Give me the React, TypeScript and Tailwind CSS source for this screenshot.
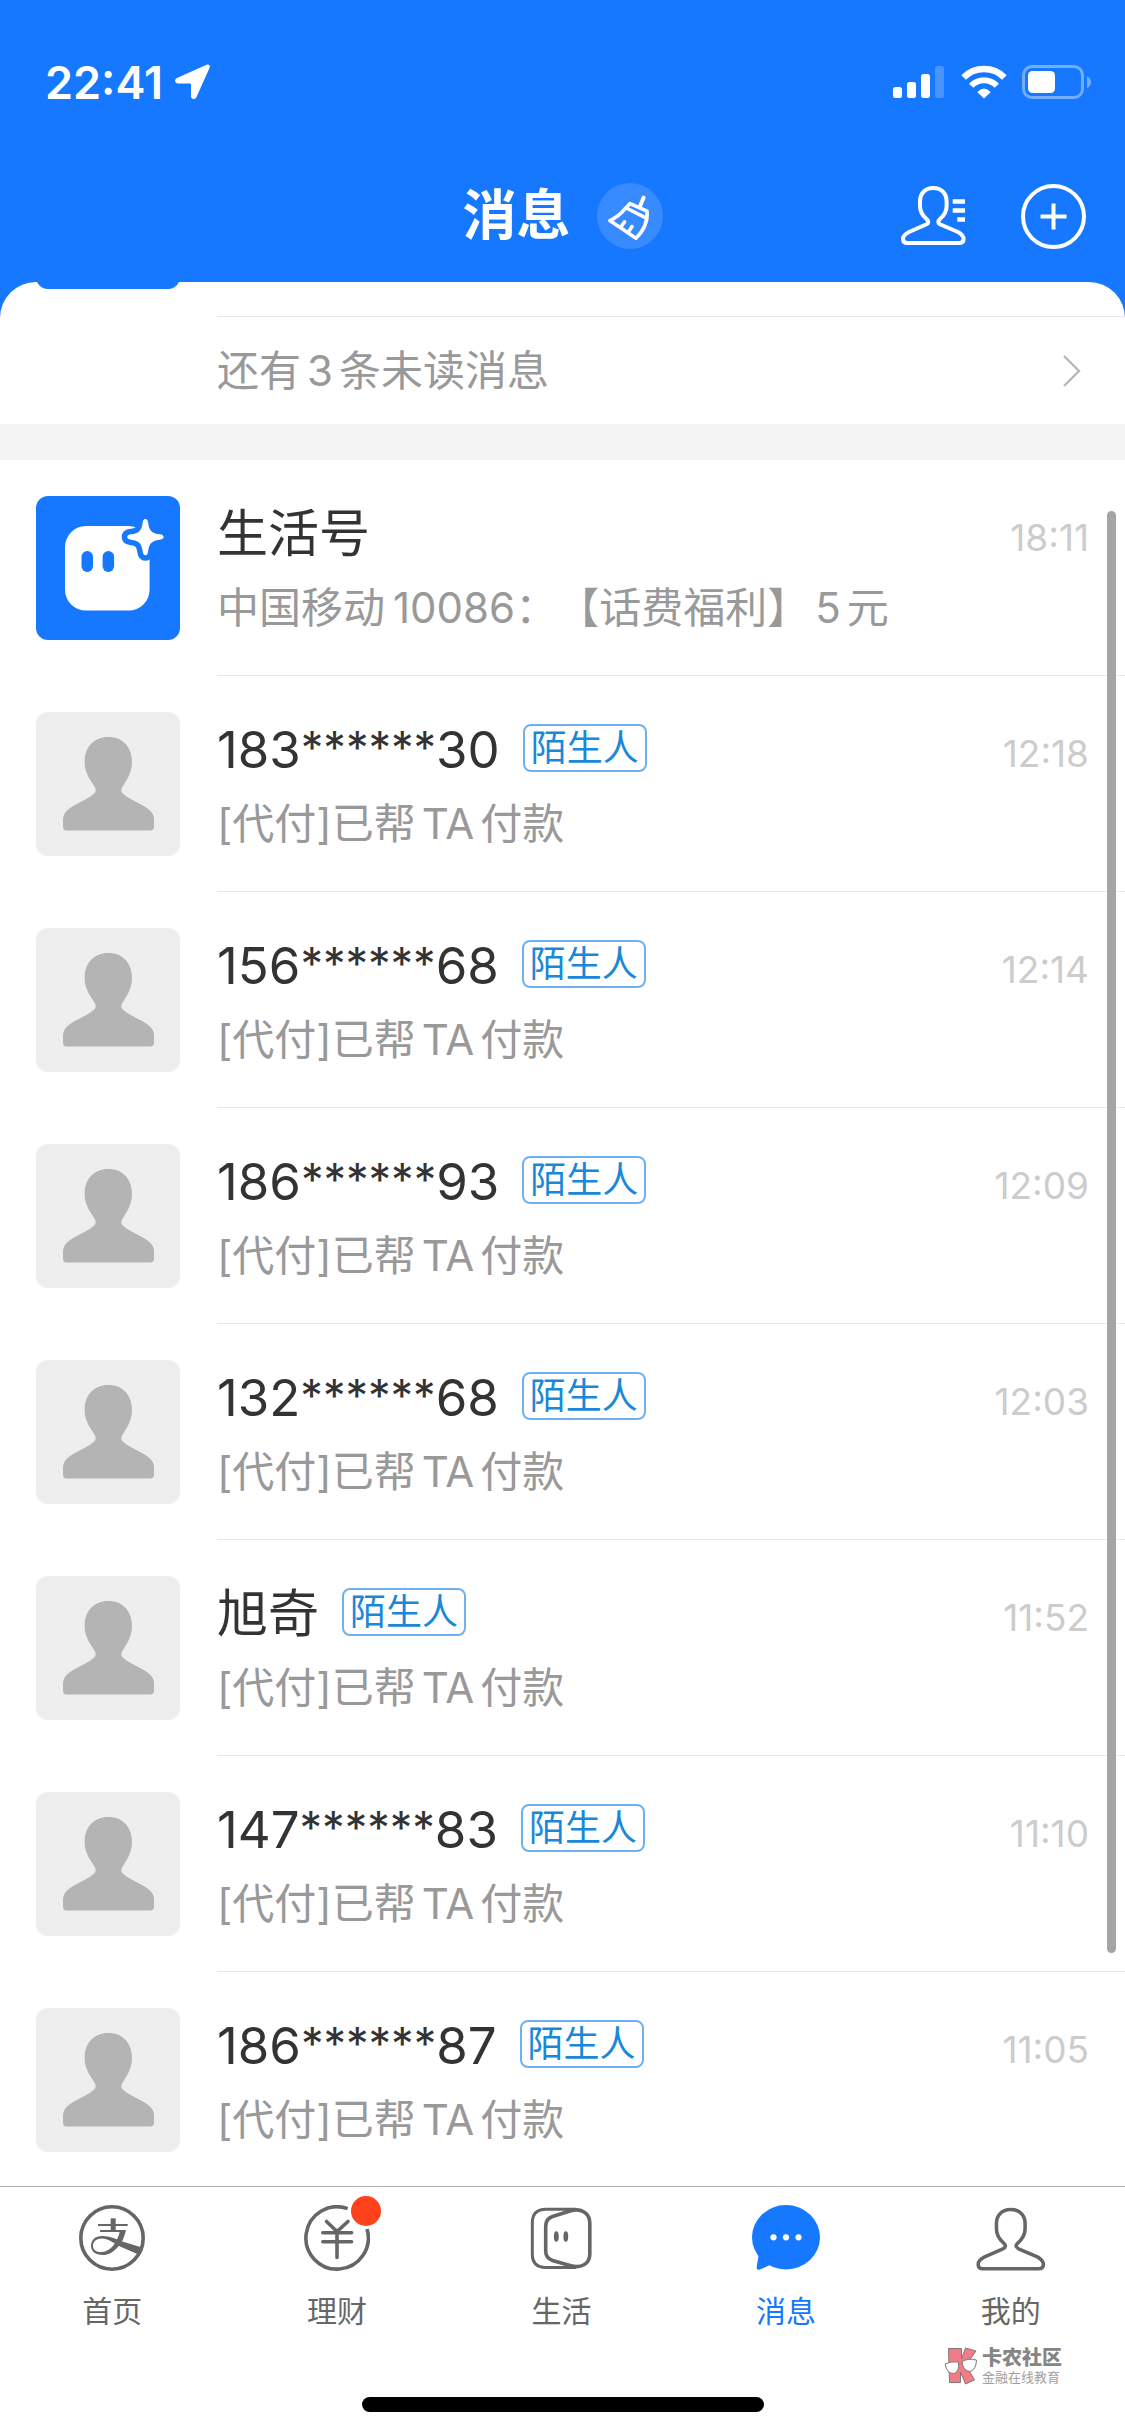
import type { ReactNode } from "react";

type Chat = { name: string; time: string };

const chats: Chat[] = [
  { name: "183******30", time: "12:18" },
  { name: "156******68", time: "12:14" },
  { name: "186******93", time: "12:09" },
  { name: "132******68", time: "12:03" },
  { name: "旭奇", time: "11:52" },
  { name: "147******83", time: "11:10" },
  { name: "186******87", time: "11:05" },
];

const PERSON =
  "M32.3 2C23 2 19 8.5 19 15V20C19 26 22 30 25.5 33C28 35.3 28 37 25 38.5L8 46C4 48 2 50 2 53C2 56 4 57 6.5 57H58C61 57 62.6 56 62.6 53C62.6 50 60.5 48 57 46L39.5 38.5C36.6 37 36.6 35.3 39 33C42.5 30 45.6 26 45.6 20V15C45.6 8.5 41.5 2 32.3 2Z";

function StatusBar() {
  return (
    <div className="flex h-14 items-center justify-between pl-[45px] pr-[33px] text-white">
      <div className="flex items-center gap-3">
        <span className="text-[45px] font-semibold leading-none">22:41</span>
        <svg width="36" height="36" viewBox="0 0 36 36" fill="currentColor" aria-hidden="true">
          <path d="M31.5 0.8C33.8-.2 35.4 1.4 34.6 3.8L21.4 33.2C20.2 36 16 35.4 16 32.2V20.6Q16 19.4 14.8 19.4H3C-.4 19.4-1 15.4 2 14Z" />
        </svg>
      </div>
      <div className="flex items-center">
        <svg width="52" height="34" viewBox="0 0 52 34" fill="currentColor" aria-hidden="true">
          <rect x="0" y="22" width="9" height="11" rx="2.5" />
          <rect x="14" y="17" width="9" height="16" rx="2.5" />
          <rect x="28" y="9" width="9" height="24" rx="2.5" />
          <rect x="42" y="1" width="9" height="32" rx="2.5" opacity=".22" />
        </svg>
        <svg className="ml-4" width="46" height="34" viewBox="0 0 46 34" fill="none" aria-hidden="true">
          <path d="M2.6 12.4A29 29 0 0 1 43.4 12.4" stroke="currentColor" strokeWidth="6.4" />
          <path d="M10.2 20.8A17.5 17.5 0 0 1 35.8 20.8" stroke="currentColor" strokeWidth="6" />
          <path d="M16.2 27Q23 20 29.8 27L23 33.6Z" fill="currentColor" />
        </svg>
        <svg className="ml-[15px]" width="70" height="34" viewBox="0 0 70 34" fill="none" aria-hidden="true">
          <rect x="1.5" y="1.5" width="59" height="31" rx="8.5" stroke="currentColor" strokeWidth="3" opacity=".4" />
          <rect x="6" y="6" width="27" height="22" rx="4.5" fill="currentColor" />
          <path d="M65 11Q69 13 69 17Q69 21 65 23Z" fill="currentColor" opacity=".4" />
        </svg>
      </div>
    </div>
  );
}

function TitleBar() {
  return (
    <div className="mt-[50px] grid h-28 grid-cols-[1fr_auto_1fr] items-center text-white">
      <span />
      <div className="flex items-center gap-[26px]">
        <h1 className="text-[54px] font-bold leading-none">消息</h1>
        <button type="button" aria-label="清除未读" className="size-[66px] rounded-full bg-[#388aff]">
          <svg viewBox="0 0 66 66" fill="none" stroke="currentColor" strokeWidth="3.6" strokeLinejoin="round" strokeLinecap="round" aria-hidden="true">
            <path d="M46.6 14.6L42.6 24.2" strokeWidth="4" />
            <path d="M33 20.6L50 28.2Q51.4 43 39 55.2L12.8 37.6Q22 33.5 28.4 25.4Z" />
            <path d="M29.2 25L49.4 35.2" />
            <path d="M27.6 38.8L24.6 43M35 43.6L32 48" />
          </svg>
        </button>
      </div>
      <div className="flex items-center justify-end gap-[55px] pr-[39px]">
        <button type="button" aria-label="通讯录">
          <svg width="65" height="60" viewBox="0 0 65 60" fill="none" aria-hidden="true">
            <path d={PERSON} stroke="currentColor" strokeWidth="4" strokeLinejoin="round" />
            <path d="M51.7 15.5H64M51.7 24.5H64M56.3 33.5H64" stroke="currentColor" strokeWidth="4.4" />
          </svg>
        </button>
        <button type="button" aria-label="添加">
          <svg width="65" height="65" viewBox="0 0 65 65" fill="none" stroke="currentColor" strokeWidth="4" aria-hidden="true">
            <circle cx="32.5" cy="32.5" r="30.5" />
            <path d="M32.5 19.5V45.5M19.5 32.5H45.5" />
          </svg>
        </button>
      </div>
    </div>
  );
}

/* Masked digits are set a little smaller and higher than the visible ones. */
function Name({ value }: { value: string }) {
  const parts = value.split(/(\*+)/);
  return (
    <h2 className="flex items-start pt-1 text-[51px] leading-[48px] text-[#333333]">
      {parts.map((p, i) => (
        <span key={i} className={p.startsWith("*") ? "text-[45px] leading-[44px]" : undefined}>
          {p}
        </span>
      ))}
    </h2>
  );
}

function Row({ avatar, name, text, time, tag, last }: { avatar: ReactNode; name: string; text: ReactNode; time: string; tag?: string; last?: boolean }) {
  return (
    <li className="flex h-[216px] shrink-0 gap-[37px] pl-9">
      <div className="mt-9 size-36 shrink-0 overflow-hidden rounded-xl">{avatar}</div>
      <div className={last ? "flex min-w-0 flex-1 justify-between pr-9" : "flex min-w-0 flex-1 justify-between border-b border-[#e9e9e9] pr-9"}>
        <div className="min-w-0 pt-12">
          <div className="flex h-12 items-center gap-[23px]">
            <Name value={name} />
            {tag && (
              <span className="flex h-12 items-center rounded-lg border-2 border-[#6fb1f0] px-1.5 text-[36px] leading-none text-[#1a88d8]">{tag}</span>
            )}
          </div>
          <p className="mt-7 whitespace-nowrap text-[42px] leading-[48px] text-[#999999]">{text}</p>
        </div>
        <time className="pt-[54px] text-[37px] leading-[48px] text-[#cccccc]">{time}</time>
      </div>
    </li>
  );
}

function LifeAvatar() {
  return (
    <svg viewBox="0 0 144 144" className="bg-[#1677ff]" aria-hidden="true">
      <rect x="29" y="30" width="84.6" height="84.6" rx="21" fill="#fff" />
      <rect x="45.5" y="55" width="11.5" height="21" rx="5.7" fill="#1677ff" />
      <rect x="66.6" y="55" width="11.5" height="21" rx="5.7" fill="#1677ff" />
      <path
        d="M109.4 23C111 23 111.8 24 112.2 27C113 34.5 116.4 37.6 123.5 38.3C126.5 38.6 127.6 39.5 127.6 41C127.6 42.5 126.5 43.4 123.5 43.7C116.4 44.4 113 47.5 112.2 55C111.8 58 111 59.2 109.4 59.2C107.8 59.2 107 58 106.6 55C105.8 47.5 102.4 44.4 95.3 43.7C92.3 43.4 91.2 42.5 91.2 41C91.2 39.5 92.3 38.6 95.3 38.3C102.4 37.6 105.8 34.5 106.6 27C107 24 107.8 23 109.4 23Z"
        fill="#fff"
        stroke="#1677ff"
        strokeWidth="11"
        strokeLinejoin="round"
        paintOrder="stroke"
      />
    </svg>
  );
}

function PersonAvatar() {
  return (
    <svg viewBox="0 0 144 144" className="bg-[#eeeeee]" aria-hidden="true">
      <path
        d="M72.4 25C58 25 48.6 35 48.6 50C48.6 60 53.5 67 57.5 73C60.5 77.5 60.5 79.5 57 82.5C50 88.5 38 92 31 98.5C28 101.5 27 104 27 108V114.5Q27 118.5 31 118.5H114Q118 118.5 118 114.5V108C118 104 117 101.5 114 98.5C107 92 95 88.5 88 82.5C84.5 79.5 84.5 77.5 87.5 73C91.5 67 96 60 96 50C96 35 86.6 25 72.4 25Z"
        fill="#b4b4b4"
      />
    </svg>
  );
}

function HomeIcon() {
  return (
    <svg width="66" height="66" viewBox="0 0 66 66" fill="none" aria-hidden="true">
      <circle cx="33" cy="33" r="31.2" stroke="currentColor" strokeWidth="3.6" />
      <path d="M19 20H48.7M21 26H46" stroke="currentColor" strokeWidth="2" />
      <path d="M31.7 13.3H36.7V26H31.7Z" fill="currentColor" />
      <path
        d="M41.2 25H47C45 33 43 38 38 43C33 48 29 50 24 50C16 50 12 46 12 41C12 35 16 31 23 31C31 31 38 34.5 45 37L62 42.3L59.5 49.5L41 41.5C34 37.5 29 33.6 23 33.6C17.5 33.6 14 36.5 14 41C14 45 17.5 47.5 23 47C31 46.5 38 39 41.2 25Z"
        fill="currentColor"
      />
    </svg>
  );
}

function WealthIcon() {
  return (
    <svg width="66" height="66" viewBox="0 0 66 66" fill="none" stroke="currentColor" strokeWidth="3.6" aria-hidden="true">
      <path d="M43.7 3.6A31.2 31.2 0 1 0 63 24" />
      <path d="M22.5 16.5L33 26.5L44 16.5M33 25.5V52.5M18.8 27.7H47.6M18.8 36.7H47.6" strokeLinecap="round" />
    </svg>
  );
}

function LifeIcon() {
  return (
    <svg width="66" height="66" viewBox="0 0 66 66" fill="none" stroke="currentColor" aria-hidden="true">
      <path d="M48 4.3H18Q4.3 4.3 4.3 18V49Q4.3 62.5 18 62.5H48" strokeWidth="3" />
      <path d="M24.5 11.5L42 6C53 2.5 61.8 8 61.8 18V49C61.8 59 53 64 42 60.5L24.5 55.5Q17.7 53 17.7 46V21Q17.7 14 24.5 11.5Z" strokeWidth="3.6" />
      <ellipse cx="28.3" cy="31.5" rx="2.4" ry="5.3" fill="currentColor" stroke="none" />
      <ellipse cx="37.8" cy="31.5" rx="2.4" ry="5.3" fill="currentColor" stroke="none" />
    </svg>
  );
}

function MessageIcon() {
  return (
    <svg width="68" height="66" viewBox="0 0 68 66" fill="currentColor" aria-hidden="true">
      <ellipse cx="34" cy="32.2" rx="34" ry="32.2" />
      <path d="M7 48L4.6 62.5Q4.6 65.6 8 64.6L19 59.5Z" />
      <g fill="#fff">
        <circle cx="21.5" cy="32.3" r="3.1" />
        <circle cx="34" cy="32.3" r="3.1" />
        <circle cx="46.5" cy="32.3" r="3.1" />
      </g>
    </svg>
  );
}

function MeIcon() {
  return (
    <svg width="70" height="66" viewBox="0 -2 65 61" fill="none" aria-hidden="true">
      <path d={PERSON} stroke="currentColor" strokeWidth="3.3" strokeLinejoin="round" />
    </svg>
  );
}

function Tab({ label, icon, active, dot }: { label: string; icon: ReactNode; active?: boolean; dot?: boolean }) {
  return (
    <a
      href="#"
      aria-current={active ? "page" : undefined}
      className={active ? "flex flex-1 flex-col items-center text-[#1677ff]" : "flex flex-1 flex-col items-center text-[#666666]"}
    >
      <span className="relative">
        {icon}
        {dot && <span className="absolute -right-[11px] -top-[9px] size-[30px] rounded-full bg-[#ff411c]" />}
      </span>
      <span className="mt-[22px] text-[30px] leading-9">{label}</span>
    </a>
  );
}

function Watermark() {
  return (
    <div className="absolute right-[63px] top-[160px] flex items-center gap-1 text-[#858585]">
      <svg width="34" height="38" viewBox="0 0 34 38" stroke="#857579" strokeWidth="1" aria-hidden="true">
        <path d="M4.5 1.5H17.5V12L21.5 1L32 4L22 18L30.5 33L21.5 37L16.5 25V35.5H5.5Z" fill="#f07c86" />
        <path d="M1 17Q7 14 14.5 15Q15.5 25 10 26.5Q3 27 1 17Z" fill="#fff" />
        <path d="M18 14.5Q24 11 32.5 13Q32 23 26 24.5Q19 24 18 14.5Z" fill="#fff" />
      </svg>
      <div className="whitespace-nowrap">
        <div className="text-[20px] font-black leading-[22px]">卡农社区</div>
        <div className="text-[13px] leading-4 text-[#a0a0a0]">金融在线教育</div>
      </div>
    </div>
  );
}

export default function App() {
  return (
    <div
      lang="zh-CN"
      className="flex h-screen flex-col overflow-hidden bg-[#1677ff] font-['Inter','Noto_Sans_CJK_SC',sans-serif] [text-spacing-trim:space-all]"
    >
      <header className="shrink-0 pb-2.5 pt-[54px]">
        <StatusBar />
        <TitleBar />
      </header>

      <main className="relative flex min-h-0 flex-1 flex-col overflow-hidden rounded-t-[36px] bg-white">
        <div className="flex h-[34px] shrink-0 flex-col justify-end overflow-hidden pb-[27px] pl-9">
          <div className="size-36 shrink-0 rounded-xl bg-[#1677ff]" />
        </div>
        <a href="#" className="ml-[217px] flex h-[108px] shrink-0 items-center justify-between border-t border-[#e9e9e9] pr-11 text-[42px] leading-none text-[#999999]">
          <span>
            还有<span className="mx-1.5">3</span>条未读消息
          </span>
          <svg width="18" height="32" viewBox="0 0 18 32" fill="none" stroke="#b8b8b8" strokeWidth="2.4" aria-hidden="true">
            <path d="M1 1L16 16L1 31" />
          </svg>
        </a>
        <div className="h-9 shrink-0 bg-[#f4f4f4]" />
        <ul className="flex flex-col">
          <Row
            avatar={<LifeAvatar />}
            name="生活号"
            text={
              <>
                中国移动<span className="ml-2">10086</span>：【话费福利】<span className="mx-1.5">5</span>元
              </>
            }
            time="18:11"
          />
          {chats.map((c, i) => (
            <Row
              key={c.name}
              avatar={<PersonAvatar />}
              name={c.name}
              tag="陌生人"
              text={
                <>
                  [代付]已帮<span className="mx-1.5">TA</span>付款
                </>
              }
              time={c.time}
              last={i === chats.length - 1}
            />
          ))}
        </ul>
        <div className="absolute right-[9px] top-[229px] h-[1442px] w-[9px] rounded-full bg-[#a5a5a5]" />
      </main>

      <footer className="relative h-[250px] shrink-0 border-t border-[#b0b0b0] bg-white">
        <nav className="flex pr-0.5 pt-[18px]">
          <Tab label="首页" icon={<HomeIcon />} />
          <Tab label="理财" icon={<WealthIcon />} dot />
          <Tab label="生活" icon={<LifeIcon />} />
          <Tab label="消息" icon={<MessageIcon />} active />
          <Tab label="我的" icon={<MeIcon />} />
        </nav>
        <Watermark />
        <div className="absolute bottom-6 left-1/2 h-[15px] w-[402px] -translate-x-1/2 rounded-full bg-black" />
      </footer>
    </div>
  );
}
